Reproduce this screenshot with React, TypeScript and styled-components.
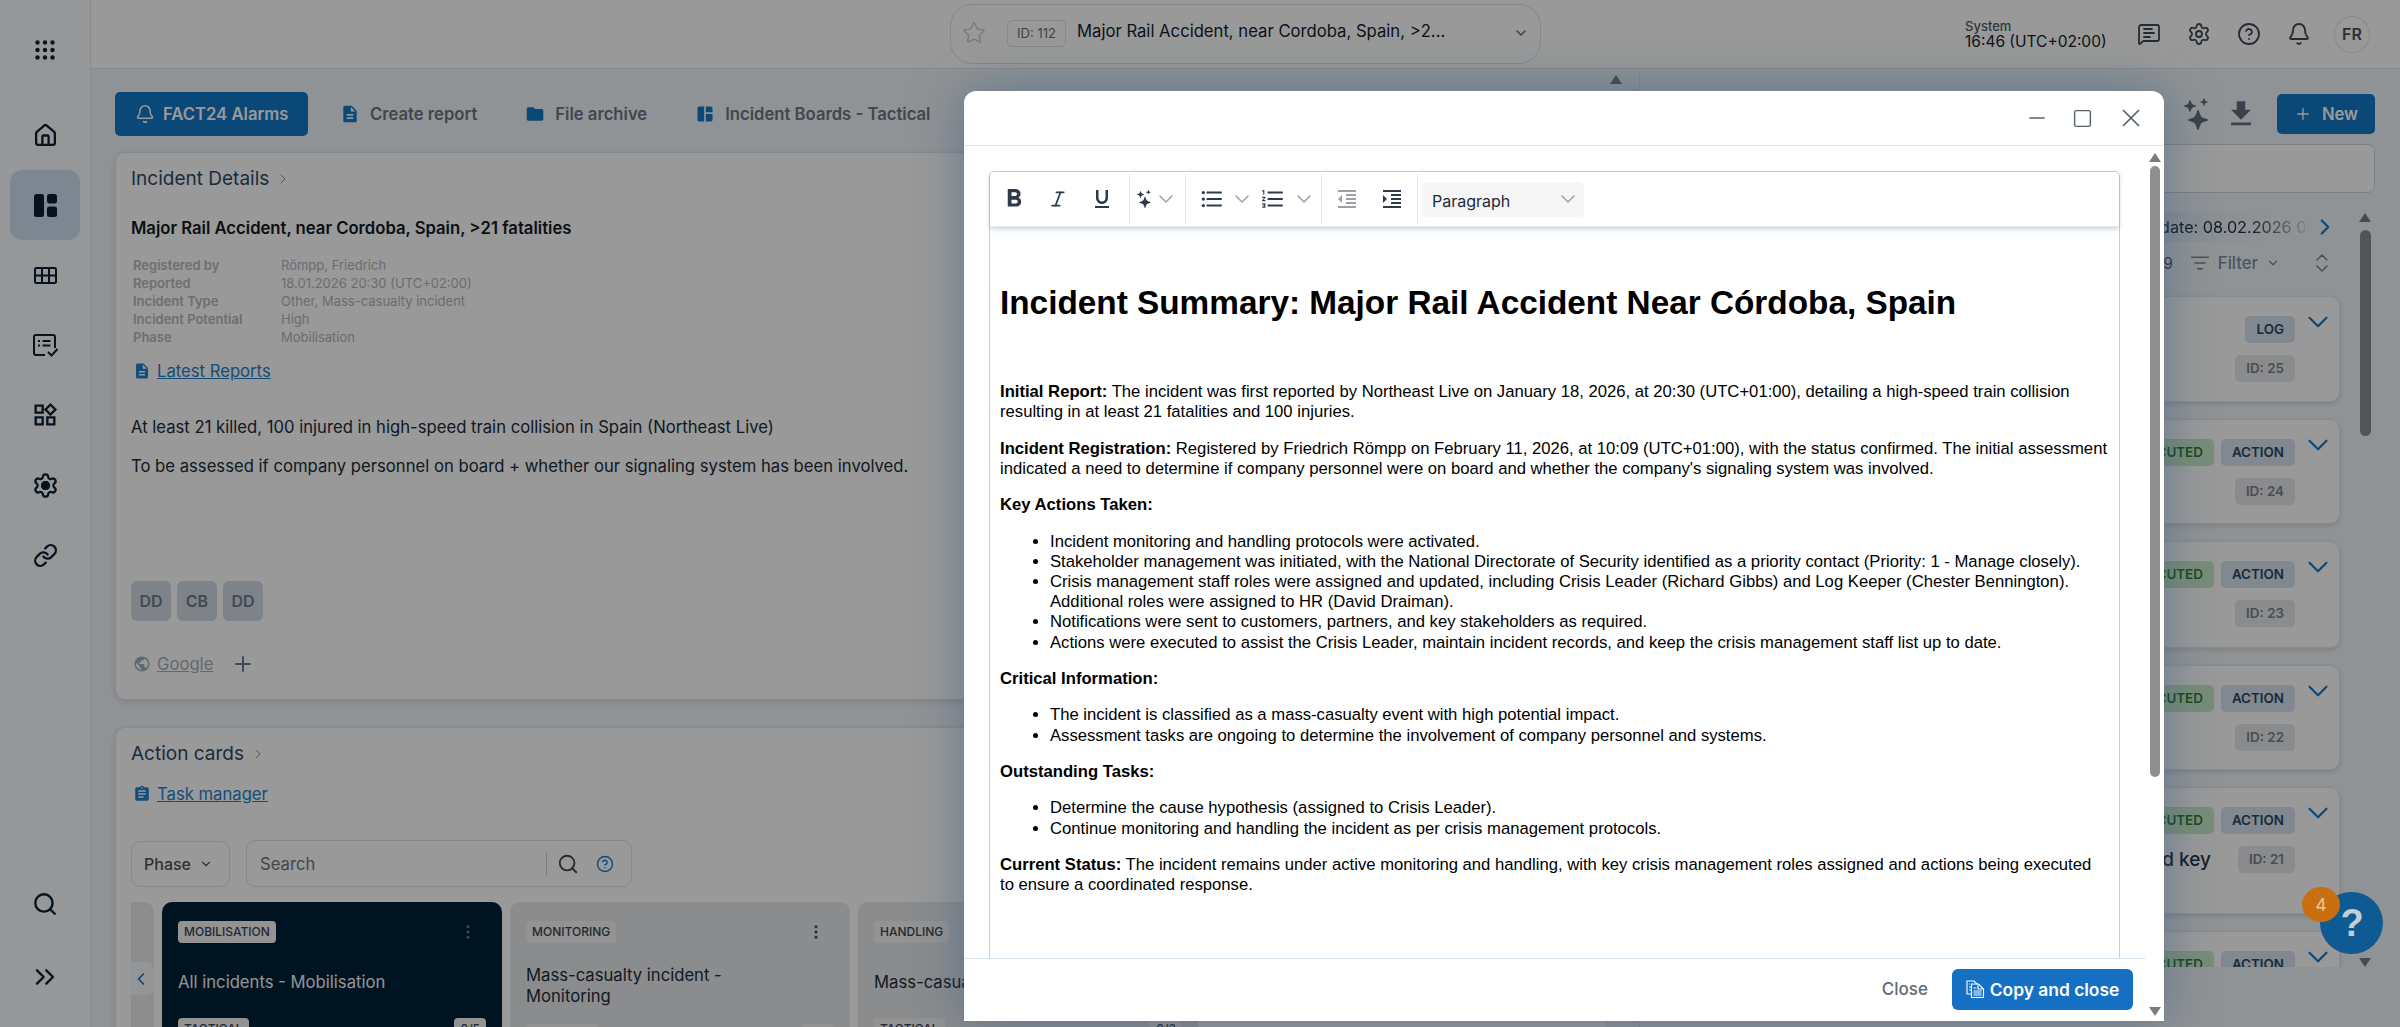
import React from 'react';
import styled, { createGlobalStyle } from 'styled-components';
import { Home, Settings, Link as LinkIcon, Search, ChevronsRight, Bell, ChevronRight, ChevronDown, ChevronLeft, Star, Plus, CircleHelp, MessageSquareText, ListFilter, ChevronsUpDown, Minus, Square, X, MoreVertical } from 'lucide-react';
import { MdSpaceDashboard, MdOutlineWidgets, MdDescription, MdFolder, MdAssignment, MdPublic, MdFileDownload, MdFormatBold, MdFormatUnderlined, MdFormatListBulleted, MdFormatListNumbered, MdFormatIndentDecrease, MdFormatIndentIncrease } from 'react-icons/md';
import { BsStars } from 'react-icons/bs';
import { LuItalic } from 'react-icons/lu';

const Global = createGlobalStyle`
  html, body { margin: 0; height: 100%; overflow: hidden; background: #fff; }
  body { font-family: Inter, "Noto Sans", sans-serif; color: #1c2a38; }
  * { box-sizing: border-box; }
`;

const Page = styled.div`
  display: flex; width: 2400px; height: 1027px; overflow: hidden; position: relative; background: #fff;
`;
const Sidebar = styled.nav`
  width: 91px; flex: none; display: flex; flex-direction: column; align-items: flex-start;
  border-right: 1px solid #e3e7ec; background: #fbfcfd; padding-bottom: 14px; color: #0a2033;
`;
const Logo = styled.div`
  width: 90px; height: 100px; display: flex; align-items: center; justify-content: center;
`;
const NavItem = styled.div<{ $active?: boolean; $tall?: boolean }>`
  width: 70px; height: ${p => (p.$tall ? 73 : 70)}px; margin-left: 10px; border-radius: 12px;
  display: flex; align-items: center; justify-content: center;
  background: ${p => (p.$active ? '#d0e2f2' : 'transparent')};
`;
const Spacer = styled.div` flex: 1; `;
const Main = styled.div` flex: 1; min-width: 0; display: flex; flex-direction: column; `;
const Header = styled.header`
  height: 69px; flex: none; display: flex; align-items: center; border-bottom: 1px solid #e2e5e9; background: #fff;
`;
const Selector = styled.div`
  margin-left: 859px; width: 591px; height: 60px; border: 1px solid #e0e3e6; border-radius: 22px;
  display: flex; align-items: center; padding: 0 11px 2px 11px; color: #1c2a38;
`;
const IdBox = styled.span`
  margin-left: 21px; height: 27px; width: 59px; flex: none; border: 1px solid #e0e3e6; border-radius: 5px;
  display: flex; align-items: center; justify-content: center; font-size: 13px; color: #6a7178;
`;
const SelectorText = styled.span`
  margin-left: 11px; flex: 1; font-size: 16.67px; white-space: nowrap; color: #14222f; padding-bottom: 4px;
`;
const HeadRight = styled.div` margin-left: auto; padding-right: 30px; display: flex; align-items: center; color: #3d4a56; `;
const SystemBlock = styled.div`
  width: 172px; font-size: 15.5px; line-height: 15px; color: #14222f;
  & small { display: block; font-size: 13px; font-weight: 500; color: #555c63; }
`;
const HeadIcons = styled.div` display: flex; gap: 26px; align-items: center; margin-right: 23px; `;
const Avatar = styled.div`
  width: 36px; height: 37px; border-radius: 50%; border: 1px solid #e0e3e6; display: flex; align-items: center; justify-content: center;
  font-size: 16px; font-weight: 600; color: #4a5158;
`;
const Content = styled.div` flex: 1; display: flex; min-height: 0; background: #f1f5f8; `;
const LeftCol = styled.div`
  width: 1516px; flex: none; padding: 23px 0 0 24px; overflow: hidden; display: flex; flex-direction: column;
`;
const Gutter = styled.div` width: 32px; flex: none; display: flex; justify-content: flex-start; padding: 6px 0 0 3px; `;
const TriUp = styled.div<{ $c?: string }>`
  width: 0; height: 0; border-left: 6px solid transparent; border-right: 6px solid transparent;
  border-bottom: 9px solid ${p => p.$c || '#7c7c7c'};
`;
const TriDown = styled(TriUp)`
  border-bottom: 0; border-top: 9px solid ${p => p.$c || '#7c7c7c'};
`;
const Toolbar = styled.div` display: flex; gap: 16px; height: 44px; flex: none; `;
const PrimaryBtn = styled.div`
  height: 44px; width: 193px; border-radius: 5px; background: #1278c8; color: #fff; display: flex; align-items: center;
  padding-left: 20px; gap: 8px; font-size: 16.67px; font-weight: 600; white-space: nowrap;
`;
const ToolBtn = styled.div`
  display: flex; align-items: center; gap: 10px; padding: 0 16px; font-size: 16.67px; font-weight: 600; color: #6b7684; white-space: nowrap;
  & svg { color: #1278c8; flex: none; }
`;
const Card = styled.section<{ $h: number; $gap: number }>`
  flex: none; height: ${p => p.$h}px; margin-top: ${p => p.$gap}px; border: 1px solid #e2e7ee; border-radius: 10px; background: #fff;
  padding: 14px 15px 0; box-shadow: 0 2px 6px rgba(40, 60, 90, .14); overflow: hidden;
`;
const CardTitle = styled.h2`
  margin: 0; font-size: 19px; line-height: 24px; font-weight: 400; color: #2e4a66; display: flex; align-items: center; gap: 6px;
  & svg { color: #8b949c; }
`;
const Strong = styled.div` margin-top: 27px; font-size: 16.67px; line-height: 20px; font-weight: 600; color: #101a24; `;
const Meta = styled.dl`
  margin: 18px 0 0 2px; display: grid; grid-template-columns: 148px 1fr; font-size: 13px; line-height: 18px;
  & dd { margin: 0; color: #b0b6bd; } & dt { font-weight: 600; color: #b4b9c0; }
`;
const LinkRow = styled.div<{ $mt: number; $muted?: boolean }>`
  margin-top: ${p => p.$mt}px; display: flex; align-items: center; gap: 6px; font-size: 16.67px; line-height: 20px; padding-left: 2px;
  color: ${p => (p.$muted ? '#a4afbd' : '#1f82cc')};
  & span { text-decoration: underline; }
`;
const Para = styled.p<{ $mt: number }>`
  margin: ${p => p.$mt}px 0 0; font-size: 16.67px; line-height: 22px; color: #202c38;
`;
const Chips = styled.div` margin-top: 104px; display: flex; gap: 6px; `;
const Chip = styled.div`
  width: 40px; height: 40px; border-radius: 6px; background: #d3dae4; display: flex; align-items: center; justify-content: center;
  font-size: 16px; font-weight: 600; color: #6f7b8a;
`;
const PlusWrap = styled.div` margin-left: 12px; display: flex; color: #6c7d8e; `;
const Controls = styled.div` margin-top: 36px; display: flex; gap: 16px; `;
const PhaseSelect = styled.div`
  width: 99px; height: 46px; margin-top: 1px; border: 1px solid #e0e4e8; border-radius: 9px; display: flex; align-items: center; gap: 8px;
  padding-left: 12px; font-size: 16px; font-weight: 500; color: #4b5259;
`;
const SearchBox = styled.div`
  width: 386px; height: 47px; border: 1px solid #dfe3e7; border-radius: 9px; display: flex; align-items: center; padding-left: 13px;
  font-size: 16.67px; color: #70777e;
`;
const SearchLabel = styled.span` flex: 1; `;
const SearchIcons = styled.div`
  display: flex; align-items: center; gap: 17px; height: 24px; border-left: 1px solid #c8ccd0; padding: 0 17px 0 10px; color: #3d4a56;
  & svg:last-child { color: #1278c8; }
`;
const Row = styled.div` margin-top: 15px; display: flex; gap: 8px; position: relative; `;
const StubCard = styled.div` width: 23px; flex: none; height: 140px; background: #e8ebef; border-radius: 0 10px 10px 0; `;
const Arrow = styled.div`
  position: absolute; left: 0; top: 60px; width: 23px; height: 33px; background: #f7f8fa; border-radius: 0 8px 8px 0;
  display: flex; align-items: center; justify-content: flex-start; color: #1278c8;
`;
const BoardCard = styled.div<{ $dark?: boolean }>`
  width: 340px; flex: none; height: 200px; border-radius: 10px; padding: 19px 16px;
  background: ${p => (p.$dark ? '#002038' : '#e6e9ed')};
  color: ${p => (p.$dark ? '#f4f6f8' : '#1d2c3a')};
`;
const BoardTop = styled.div` display: flex; justify-content: space-between; align-items: center; `;
const Tag = styled.span`
  display: inline-block; height: 22px; line-height: 22px; padding: 0 6px; border-radius: 4px; background: #f5f6f7; color: #3e444a;
  font-size: 12px; font-weight: 500; text-transform: uppercase;
`;
const Dots = styled.div<{ $dim?: boolean }>`
  display: flex; margin-right: 9px; color: ${p => (p.$dim ? '#6b7782' : '#3f464d')};
`;
const BoardTitle = styled.div<{ $two?: boolean }>`
  margin: ${p => (p.$two ? '22px 0 17px' : '29px 0 25px')}; font-size: 16.67px; line-height: 21px; width: 250px; white-space: pre-line;
`;
const BoardBottom = styled.div` display: flex; justify-content: space-between; padding-right: 0; `;
const RightCol = styled.aside`
  flex: 1; min-width: 0; border-left: 1px solid #e2e5e9; display: flex; flex-direction: column; padding: 25px 24px 0 0; align-items: stretch;
`;
const RightTop = styled.div` display: flex; justify-content: flex-end; align-items: center; height: 40px; color: #5f6e7d; flex: none; `;
const NewBtn = styled.div`
  margin-left: 19px; width: 98px; height: 40px; border-radius: 5px; background: #1278c8; color: #fff; font-size: 16.67px; font-weight: 600;
  display: flex; align-items: center; justify-content: center; gap: 10px; margin-right: 1px;
`;
const StarsWrap = styled.div` display: flex; margin-right: 10px; `;
const RightSearch = styled.div`
  flex: none; margin: 10px 1px 0 22px; height: 49px; border: 1px solid #c9d6e4; border-radius: 7px; background: #fff;
`;
const ScrollArea = styled.div` flex: none; margin-top: 17px; height: 757px; display: flex; `;
const Scroller = styled.div` flex: 1; min-width: 0; padding-right: 14px; overflow: hidden; `;
const Timeline = styled.div`
  height: 30px; margin-top: 2px; display: flex; justify-content: flex-end; align-items: center; gap: 2px; padding-right: 2px; font-size: 16.2px;
  color: #1a3147; background: linear-gradient(to right, #d3e1f0 55%, rgba(211, 225, 240, 0) 92%);
  & svg { color: #1278c8; flex: none; }
`;
const Fade = styled.span`
  white-space: nowrap; -webkit-mask-image: linear-gradient(to right, #000 62%, rgba(0,0,0,.15) 100%); mask-image: linear-gradient(to right, #000 62%, rgba(0,0,0,.15) 100%);
  width: 145px; overflow: hidden; margin-right: 5px;
`;
const FilterRow = styled.div`
  height: 32px; margin-top: 5px; display: flex; justify-content: flex-end; align-items: center; font-size: 16.67px; color: #7d8da6; padding-right: 6px;
`;
const FilterItem = styled.span` display: flex; align-items: center; gap: 8px; margin-right: 30px; font-weight: 500; & svg { color: #7d8590; } `;
const Count = styled.span` margin-right: 17px; font-size: 15.5px; color: #4c5966; `;
const Feed = styled.div` margin-top: 17px; display: flex; flex-direction: column; gap: 17px; `;
const FeedCard = styled.div<{ $h: number }>`
  height: ${p => p.$h}px; flex: none; border: 1px solid #e4e8ee; border-radius: 10px; background: #fff; box-shadow: 0 2px 5px rgba(40, 60, 90, .16);
  display: flex; padding: 19px 4px 0 0; gap: 6px; justify-content: flex-end;
  & > svg { color: #1278c8; flex: none; margin-top: -11px; }
`;
const FeedCol = styled.div` display: flex; flex-direction: column; align-items: flex-end; gap: 12px; `;
const FeedRow = styled.div` display: flex; gap: 7px; align-items: center; `;
const Badge = styled.span<{ $kind: 'type' | 'id' | 'ok' }>`
  height: 27px; line-height: 27px; padding: 0 11px; border-radius: 5px; font-size: 13.4px; font-weight: 600; white-space: nowrap;
  background: ${p => (p.$kind === 'type' ? '#d7e3ef' : p.$kind === 'ok' ? '#c9ecc9' : '#e6e8ea')};
  color: ${p => (p.$kind === 'type' ? '#2c4763' : p.$kind === 'ok' ? '#2f7a35' : '#7a8188')};
`;
const FeedText = styled.span` font-size: 19px; font-weight: 500; color: #1f3347; margin-right: 20px; white-space: nowrap; `;
const SideBar = styled.div`
  width: 22px; flex: none; display: flex; flex-direction: column; align-items: center; justify-content: space-between; padding: 3px 0 0;
`;
const SideThumb = styled.div` width: 11px; height: 206px; margin-top: 8px; border-radius: 6px; background: #8c8c8c; `;
const SideGroup = styled.div` display: flex; flex-direction: column; align-items: center; `;
const Overlay = styled.div` position: absolute; inset: 0; background: rgba(0, 0, 0, .4); `;
const Help = styled.div`
  position: absolute; left: 2320px; top: 892px; width: 63px; height: 62px; border-radius: 50%; background: #0e5a92; color: #c3cdd6;
  display: flex; align-items: center; justify-content: center; font-size: 38px; font-weight: 700; padding-left: 1px; font-family: "Liberation Sans", sans-serif;
`;
const HelpBadge = styled.div`
  position: absolute; left: 2302px; top: 887px; width: 38px; height: 35px; border-radius: 50%; background: #c96f10; color: #ecc79c;
  display: flex; align-items: center; justify-content: center; font-size: 17px;
`;
const Modal = styled.div`
  position: absolute; left: 964px; top: 91px; width: 1200px; height: 930px; background: #fff; border-radius: 12px 12px 0 0;
  display: flex; flex-direction: column; overflow: hidden; box-shadow: 0 0 50px rgba(50, 85, 125, .5);
`;
const ModalHead = styled.div`
  height: 55px; flex: none; border-bottom: 1px solid #dce5ee; display: flex; justify-content: flex-end; align-items: center; gap: 23px; padding: 0 18px 0 0; color: #56626e;
`;
const ModalBody = styled.div` flex: 1; min-height: 0; display: flex; `;
const ModalMain = styled.div` flex: 1; min-width: 0; display: flex; flex-direction: column; `;
const ModalScroll = styled.div` flex: 1; min-height: 0; overflow: hidden; padding: 25px 25px 0 25px; `;
const Editor = styled.div` border: 1px solid #c2d0e0; border-radius: 5px 5px 0 0; height: 800px; `;
const EdTools = styled.div`
  height: 55px; display: flex; align-items: center; box-shadow: 0 2px 5px rgba(60, 90, 130, .28); border-bottom: 1px solid #e6ebf1; color: #2d3a4a;
`;
const EdGroup = styled.div<{ $w: number; $pl?: number; $gap?: number }>`
  width: ${p => p.$w}px; height: 49px; flex: none; display: flex; align-items: center; padding-left: ${p => p.$pl ?? 0}px; gap: ${p => p.$gap ?? 0}px;
  border-right: 1px solid #dbe6f2;
`;
const EdBtn = styled.div<{ $w: number }>` width: ${p => p.$w}px; display: flex; justify-content: center; flex: none; `;
const Caret = styled(ChevronDown)` color: #9ea4aa; flex: none; `;
const BlockSelect = styled.div`
  width: 162px; height: 35px; margin-left: 4px; background: #f6f6f6; border-radius: 5px; display: flex; align-items: center; justify-content: space-between;
  padding: 0 4px 0 10px; font-size: 16px; color: #1c2a38;
`;
const BlockLabel = styled.span` padding-top: 3px; `;
const Doc = styled.div`
  padding: 0 10px; font-family: "Liberation Sans", Arial, sans-serif; color: #000; font-size: 16.67px; line-height: 20.2px;
  & h1 { margin: 56px 0 59px; font-size: 33.33px; line-height: 40px; font-weight: 700; }
  & p { margin: 0 0 16.2px; }
  & ul { margin: 0 0 16.2px; padding-left: 50px; }
`;
const ModalFoot = styled.div`
  height: 63px; flex: none; border-top: 1px solid #d6e4ee; display: flex; justify-content: flex-end; align-items: center; padding: 0 12px 2px 0; gap: 24px; background: #fff;
`;
const CloseText = styled.span` font-size: 17px; font-weight: 500; color: #5f6b76; `;
const CopyBtn = styled.div`
  width: 181px; height: 41px; background: #1570c4; border-radius: 6px; color: #fff; font-size: 17.4px; font-weight: 600; display: flex; align-items: center; justify-content: center; gap: 5px; white-space: nowrap;
`;
const ModalBar = styled.div`
  width: 19px; flex: none; display: flex; flex-direction: column; align-items: center; padding: 7px 0 5px; background: #fff;
`;
const ModalThumb = styled.div` width: 10px; height: 611px; margin-top: 4px; border-radius: 5px; background: #8f8f8f; `;
const Grow = styled.div` flex: 1; `;

const DotGrid = () => (
  <svg width="20" height="20" viewBox="0 0 20 20" fill="currentColor">
    {[2.5, 10, 17.5].flatMap(y => [2.5, 10, 17.5].map(x => <circle key={`${x}${y}`} cx={x} cy={y} r="2.2" />))}
  </svg>
);
const BoardIcon = () => (
  <svg width="23" height="23" viewBox="0 0 23 23" fill="currentColor">
    <rect x="0" y="0" width="10" height="23" rx="2.5" />
    <rect x="13" y="0" width="10" height="9.5" rx="2.5" />
    <rect x="13" y="12.5" width="10" height="10.5" rx="2.5" />
  </svg>
);
const TableIcon = () => (
  <svg width="23" height="17" viewBox="0 0 23 17" fill="none" stroke="currentColor" strokeWidth="2">
    <rect x="1" y="1" width="21" height="15" rx="1.5" />
    <path d="M1 8.5h21M8 1v15M15 1v15" />
  </svg>
);
const TaskIcon = () => (
  <svg width="25" height="23" viewBox="0 0 25 23" fill="none" stroke="currentColor" strokeWidth="2">
    <path d="M12 21H3a2 2 0 0 1-2-2V3a2 2 0 0 1 2-2h17a2 2 0 0 1 2 2v11" />
    <path d="M5 7h2M9.500 7h8M5 11.500h2M9.500 11.500h8" />
    <path d="M15 18l3.500 3.500L24.500 15" />
  </svg>
);
const CopyIcon = () => (
  <svg width="19" height="18" viewBox="0 0 19 18" fill="none" stroke="currentColor" strokeWidth="1.1">
    <path d="M5 14H1V1h7l3 3" />
    <path d="M3 4h1M3 7h2M3 10h2" />
    <path d="M5.500 4h7l5 5v8.500h-12z" />
    <path d="M12 4.500V9h5M7.500 8h3M7.500 11h8M7.500 13h8M7.500 15h8" />
  </svg>
);

const feed = [
  { h: 106, ok: false, type: 'LOG', id: 25 },
  { h: 105, ok: true, type: 'ACTION', id: 24 },
  { h: 107, ok: true, type: 'ACTION', id: 23 },
  { h: 105, ok: true, type: 'ACTION', id: 22 },
  { h: 127, ok: true, type: 'ACTION', id: 21, text: 'Assign staff roles and key' },
  { h: 127, ok: true, type: 'ACTION', id: 20 },
];

export default function App() {
  return (
    <Page>
      <Global />
      <Sidebar>
        <Logo><DotGrid /></Logo>
        <NavItem><Home size={25} strokeWidth={2.2} /></NavItem>
        <NavItem $active><BoardIcon /></NavItem>
        <NavItem><TableIcon /></NavItem>
        <NavItem><TaskIcon /></NavItem>
        <NavItem><MdOutlineWidgets size={28} /></NavItem>
        <NavItem><Settings size={27} strokeWidth={2}><circle cx="12" cy="12" r="3" fill="currentColor" /></Settings></NavItem>
        <NavItem><LinkIcon size={25} strokeWidth={2.2} /></NavItem>
        <Spacer />
        <NavItem $tall><Search size={26} strokeWidth={2.2} /></NavItem>
        <NavItem $tall><ChevronsRight size={32} strokeWidth={1.8} /></NavItem>
      </Sidebar>
      <Main>
        <Header>
          <Selector>
            <Star size={24} strokeWidth={1.3} color="#c4c8cc" />
            <IdBox>ID: 112</IdBox>
            <SelectorText>Major Rail Accident, near Cordoba, Spain, &gt;2...</SelectorText>
            <ChevronDown size={16} color="#5e666e" />
          </Selector>
          <HeadRight>
            <SystemBlock><small>System</small>16:46 (UTC+02:00)</SystemBlock>
            <HeadIcons>
              <MessageSquareText size={24} strokeWidth={1.8} />
              <Settings size={24} strokeWidth={1.8} />
              <CircleHelp size={24} strokeWidth={1.8} />
              <Bell size={24} strokeWidth={1.8} />
            </HeadIcons>
            <Avatar>FR</Avatar>
          </HeadRight>
        </Header>
        <Content>
          <LeftCol>
            <Toolbar>
              <PrimaryBtn><Bell size={20} strokeWidth={1.8} />FACT24 Alarms</PrimaryBtn>
              <ToolBtn><MdDescription size={20} />Create report</ToolBtn>
              <ToolBtn><MdFolder size={20} />File archive</ToolBtn>
              <ToolBtn><MdSpaceDashboard size={20} />Incident Boards - Tactical</ToolBtn>
            </Toolbar>
            <Card $h={548} $gap={16}>
              <CardTitle>Incident Details <ChevronRight size={16} strokeWidth={1.5} /></CardTitle>
              <Strong>Major Rail Accident, near Cordoba, Spain, &gt;21 fatalities</Strong>
              <Meta>
                <dt>Registered by</dt><dd>Römpp, Friedrich</dd>
                <dt>Reported</dt><dd>18.01.2026 20:30 (UTC+02:00)</dd>
                <dt>Incident Type</dt><dd>Other, Mass-casualty incident</dd>
                <dt>Incident Potential</dt><dd>High</dd>
                <dt>Phase</dt><dd>Mobilisation</dd>
              </Meta>
              <LinkRow $mt={15}><MdDescription size={18} /><span>Latest Reports</span></LinkRow>
              <Para $mt={35}>At least 21 killed, 100 injured in high-speed train collision in Spain (Northeast Live)</Para>
              <Para $mt={17}>To be assessed if company personnel on board + whether our signaling system has been involved.</Para>
              <Chips><Chip>DD</Chip><Chip>CB</Chip><Chip>DD</Chip></Chips>
              <LinkRow $mt={31} $muted>
                <MdPublic size={18} /><span>Google</span>
                <PlusWrap><Plus size={24} strokeWidth={2} /></PlusWrap>
              </LinkRow>
            </Card>
            <Card $h={320} $gap={27}>
              <CardTitle>Action cards <ChevronRight size={16} strokeWidth={1.5} /></CardTitle>
              <LinkRow $mt={18}><MdAssignment size={18} /><span>Task manager</span></LinkRow>
              <Controls>
                <PhaseSelect>Phase <ChevronDown size={14} /></PhaseSelect>
                <SearchBox>
                  <SearchLabel>Search</SearchLabel>
                  <SearchIcons><Search size={22} strokeWidth={2} /><CircleHelp size={18} strokeWidth={1.8} /></SearchIcons>
                </SearchBox>
              </Controls>
              <Row>
                <StubCard />
                <Arrow><ChevronLeft size={20} strokeWidth={2} /></Arrow>
                <BoardCard $dark>
                  <BoardTop><Tag>Mobilisation</Tag><Dots $dim><MoreVertical size={18} /></Dots></BoardTop>
                  <BoardTitle>All incidents - Mobilisation</BoardTitle>
                  <BoardBottom><Tag>Tactical</Tag><Tag>0/5</Tag></BoardBottom>
                </BoardCard>
                <BoardCard>
                  <BoardTop><Tag>Monitoring</Tag><Dots><MoreVertical size={18} /></Dots></BoardTop>
                  <BoardTitle $two>{'Mass-casualty incident -\nMonitoring'}</BoardTitle>
                  <BoardBottom><Tag>Tactical</Tag><Tag>0/3</Tag></BoardBottom>
                </BoardCard>
                <BoardCard>
                  <BoardTop><Tag>Handling</Tag><Dots><MoreVertical size={18} /></Dots></BoardTop>
                  <BoardTitle>Mass-casualty incident</BoardTitle>
                  <BoardBottom><Tag>Tactical</Tag><Tag>0/3</Tag></BoardBottom>
                </BoardCard>
              </Row>
            </Card>
          </LeftCol>
          <Gutter><TriUp /></Gutter>
          <RightCol>
            <RightTop>
              <StarsWrap><BsStars size={32} /></StarsWrap>
              <MdFileDownload size={34} />
              <NewBtn><Plus size={18} strokeWidth={1.8} />New</NewBtn>
            </RightTop>
            <RightSearch />
            <ScrollArea>
              <Scroller>
                <Timeline><Fade>date: 08.02.2026 08:00</Fade><ChevronRight size={26} strokeWidth={2} /></Timeline>
                <FilterRow>
                  <Count>19</Count>
                  <FilterItem><ListFilter size={20} strokeWidth={1.8} />Filter<ChevronDown size={14} /></FilterItem>
                  <ChevronsUpDown size={24} strokeWidth={1.5} color="#7d8590" />
                </FilterRow>
                <Feed>
                  {feed.map(f => (
                    <FeedCard key={f.id} $h={f.h}>
                      <FeedCol>
                        <FeedRow>
                          {f.ok && <Badge $kind="ok">EXECUTED</Badge>}
                          <Badge $kind="type">{f.type}</Badge>
                        </FeedRow>
                        <FeedRow>
                          {f.text && <FeedText>{f.text}</FeedText>}
                          <Badge $kind="id">ID: {f.id}</Badge>
                        </FeedRow>
                      </FeedCol>
                      <ChevronDown size={34} strokeWidth={1.5} />
                    </FeedCard>
                  ))}
                </Feed>
              </Scroller>
              <SideBar>
                <SideGroup><TriUp /><SideThumb /></SideGroup>
                <TriDown />
              </SideBar>
            </ScrollArea>
          </RightCol>
        </Content>
      </Main>
      <Overlay />
      <Help>?</Help>
      <HelpBadge>4</HelpBadge>
      <Modal>
        <ModalHead>
          <Minus size={24} strokeWidth={1.6} />
          <Square size={21} strokeWidth={1.6} />
          <X size={30} strokeWidth={1.4} />
        </ModalHead>
        <ModalBody>
          <ModalMain>
            <ModalScroll>
              <Editor>
                <EdTools>
                  <EdGroup $w={140} $pl={2}>
                    <EdBtn $w={44}><MdFormatBold size={30} /></EdBtn>
                    <EdBtn $w={44}><LuItalic size={20} /></EdBtn>
                    <EdBtn $w={44}><MdFormatUnderlined size={24} /></EdBtn>
                  </EdGroup>
                  <EdGroup $w={56} $pl={6}><BsStars size={18} /><Caret size={24} strokeWidth={1.6} /></EdGroup>
                  <EdGroup $w={136} $pl={13}>
                    <MdFormatListBulleted size={26} />
                    <EdBtn $w={34}><Caret size={24} strokeWidth={1.6} /></EdBtn>
                    <EdBtn $w={28}><MdFormatListNumbered size={26} /></EdBtn>
                    <EdBtn $w={34}><Caret size={24} strokeWidth={1.6} /></EdBtn>
                  </EdGroup>
                  <EdGroup $w={96} $pl={13} $gap={21}>
                    <MdFormatIndentDecrease size={24} color="#9aa0a6" />
                    <MdFormatIndentIncrease size={24} />
                  </EdGroup>
                  <BlockSelect><BlockLabel>Paragraph</BlockLabel><Caret size={24} strokeWidth={1.6} /></BlockSelect>
                </EdTools>
                <Doc>
                  <h1>Incident Summary: Major Rail Accident Near Córdoba, Spain</h1>
                  <p><b>Initial Report:</b> The incident was first reported by Northeast Live on January 18, 2026, at 20:30 (UTC+01:00), detailing a high-speed train collision resulting in at least 21 fatalities and 100 injuries.</p>
                  <p><b>Incident Registration:</b> Registered by Friedrich Römpp on February 11, 2026, at 10:09 (UTC+01:00), with the status confirmed. The initial assessment indicated a need to determine if company personnel were on board and whether the company's signaling system was involved.</p>
                  <p><b>Key Actions Taken:</b></p>
                  <ul>
                    <li>Incident monitoring and handling protocols were activated.</li>
                    <li>Stakeholder management was initiated, with the National Directorate of Security identified as a priority contact (Priority: 1 - Manage closely).</li>
                    <li>Crisis management staff roles were assigned and updated, including Crisis Leader (Richard Gibbs) and Log Keeper (Chester Bennington). Additional roles were assigned to HR (David Draiman).</li>
                    <li>Notifications were sent to customers, partners, and key stakeholders as required.</li>
                    <li>Actions were executed to assist the Crisis Leader, maintain incident records, and keep the crisis management staff list up to date.</li>
                  </ul>
                  <p><b>Critical Information:</b></p>
                  <ul>
                    <li>The incident is classified as a mass-casualty event with high potential impact.</li>
                    <li>Assessment tasks are ongoing to determine the involvement of company personnel and systems.</li>
                  </ul>
                  <p><b>Outstanding Tasks:</b></p>
                  <ul>
                    <li>Determine the cause hypothesis (assigned to Crisis Leader).</li>
                    <li>Continue monitoring and handling the incident as per crisis management protocols.</li>
                  </ul>
                  <p><b>Current Status:</b> The incident remains under active monitoring and handling, with key crisis management roles assigned and actions being executed to ensure a coordinated response.</p>
                </Doc>
              </Editor>
            </ModalScroll>
            <ModalFoot>
              <CloseText>Close</CloseText>
              <CopyBtn><CopyIcon />Copy and close</CopyBtn>
            </ModalFoot>
          </ModalMain>
          <ModalBar>
            <TriUp />
            <ModalThumb />
            <Grow />
            <TriDown />
          </ModalBar>
        </ModalBody>
      </Modal>
    </Page>
  );
}
